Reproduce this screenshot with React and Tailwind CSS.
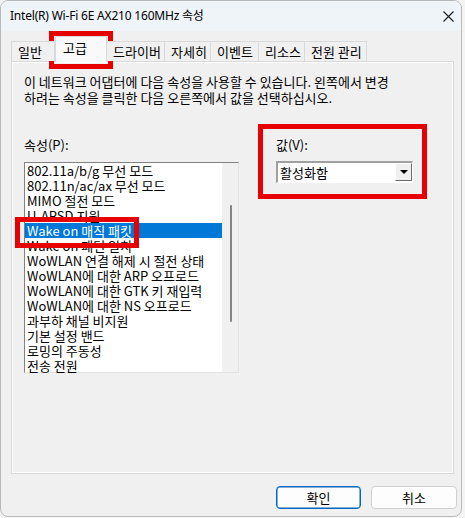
const tabs = [
  { label: "일반", w: "w-[44px]" },
  { label: "고급", w: "w-[52px]", active: true },
  { label: "드라이버", w: "w-[59px]" },
  { label: "자세히", w: "w-[47px]" },
  { label: "이벤트", w: "w-[49px]" },
  { label: "리소스", w: "w-[47px]" },
  { label: "전원 관리", w: "w-[63px]" },
];

const properties = [
  "802.11a/b/g 무선 모드",
  "802.11n/ac/ax 무선 모드",
  "MIMO 절전 모드",
  "U-APSD 지원",
  "Wake on 매직 패킷",
  "Wake on 패턴 일치",
  "WoWLAN 연결 해제 시 절전 상태",
  "WoWLAN에 대한 ARP 오프로드",
  "WoWLAN에 대한 GTK 키 재입력",
  "WoWLAN에 대한 NS 오프로드",
  "과부하 채널 비지원",
  "기본 설정 밴드",
  "로밍의 주동성",
  "전송 전원",
];

const SELECTED = 4;

const App = () => {
  return (
    <div className="relative w-[465px] h-[518px] overflow-hidden bg-[#f4f4f4] font-['Noto_Sans_CJK_KR',sans-serif] text-[13px] text-black">
      {/* Dialog window */}
      <div className="w-[462px] h-[517px] rounded-lg border border-[#b9b9b9] bg-[#f0f0f0] overflow-hidden flex flex-col">
        {/* Title bar */}
        <div className="h-[30px] shrink-0 bg-[#eff4f9] flex items-center justify-between pl-[9px] pr-[7px]">
          <span className="font-['Noto_Sans','Noto_Sans_CJK_KR',sans-serif] text-[12px] leading-none tracking-[-0.2px]">
            Intel(R) Wi-Fi 6E AX210 160MHz 속성
          </span>
          <svg width="11" height="11" viewBox="0 0 11 11">
            <path d="M0.5 0.5 L10.5 10.5 M10.5 0.5 L0.5 10.5" stroke="#1a1a1a" strokeWidth="1.1" />
          </svg>
        </div>

        {/* Body */}
        <div className="flex-1 pl-[10px] pr-[7px] pt-[10px]">
          {/* Tabs */}
          <div className="flex items-end h-[20px] relative z-10">
            {tabs.map((tab) =>
              tab.active ? (
                <div
                  key={tab.label}
                  className={`${tab.w} h-[26px] -mb-[1px] bg-[#f9f9f9] border border-b-0 border-[#d9d9d9] pl-[7px] pt-[3px] leading-[16px]`}
                >
                  {tab.label}
                </div>
              ) : (
                <div
                  key={tab.label}
                  className={`${tab.w} h-[20px] bg-[#f0f0f0] border border-b-0 border-[#d9d9d9] -ml-[1px] first:ml-0 pl-[6px] pt-[2px] leading-[16px] whitespace-nowrap`}
                >
                  {tab.label}
                </div>
              )
            )}
          </div>

          {/* Panel */}
          <div className="h-[413px] border border-[#d9d9d9] bg-[#f9f9f9]">
            <div className="h-full border border-white bg-[#f0f0f0] pl-[11px] pt-[11px] flex flex-col">
              <p className="leading-[16px]">
                이 네트워크 어댑터에 다음 속성을 사용할 수 있습니다. 왼쪽에서 변경
                <br />
                하려는 속성을 클릭한 다음 오른쪽에서 값을 선택하십시오.
              </p>

              <div className="flex mt-[31px]">
                {/* Property list */}
                <div className="w-[215px]">
                  <div className="leading-[16px] h-[16px]">속성(P):</div>
                  <div className="mt-[9px] h-[211px] border-t border-l border-[#828282] border-r border-b border-r-[#e3e3e3] border-b-[#e3e3e3] bg-white flex">
                    <div className="flex-1 min-w-0">
                      {properties.map((p, i) => (
                        <div
                          key={p}
                          className={`h-[15px] leading-[15px] pl-[2px] whitespace-nowrap ${
                            i === SELECTED ? "bg-[#0078d7] text-white" : ""
                          }`}
                        >
                          {p}
                        </div>
                      ))}
                    </div>
                    <div className="w-[16px] bg-[#f0f0f0] flex justify-center pt-[42px] pl-[1px]">
                      <div className="w-[2px] h-[117px] rounded-full bg-[#858585]" />
                    </div>
                  </div>
                </div>

                {/* Value */}
                <div className="ml-[37px]">
                  <div className="leading-[16px] h-[16px]">값(V):</div>
                  <div className="mt-[8px] w-[137px] h-[22px] border-t-2 border-l-2 border-[#a0a0a0] border-r border-b border-r-white border-b-white bg-white flex">
                    <div className="flex-1 pl-[2px] leading-[19px]">활성화함</div>
                    <div className="w-[17px] h-[18px] border border-t-white border-l-white border-r-[#696969] border-b-[#696969] bg-[#f0f0f0] flex items-center justify-center">
                      <svg width="8" height="4" viewBox="0 0 8 4">
                        <path d="M0 0 L8 0 L4 4 Z" fill="#000" />
                      </svg>
                    </div>
                  </div>
                </div>
              </div>
            </div>
          </div>

          {/* Buttons */}
          <div className="flex justify-end gap-[10px] mt-[12px] -mr-[3px]">
            <button className="w-[85px] h-[23px] rounded-[4px] border border-[#0067c0] bg-[#fdfdfd] shadow-[inset_0_0_0_0.5px_#0067c0] leading-[20px]">
              확인
            </button>
            <button className="w-[86px] h-[23px] rounded-[4px] border border-[#d0d0d0] bg-[#fdfdfd] leading-[20px]">
              취소
            </button>
          </div>
        </div>
      </div>

      {/* Red annotation boxes */}
      <div className="absolute left-[49px] top-[31px] w-[64px] h-[38px] border-[5px] border-[#e60000]" />
      <div className="absolute left-[15px] top-[217px] w-[124px] h-[31px] border-[5px] border-[#e60000]" />
      <div className="absolute left-[258px] top-[124px] w-[169px] h-[75px] border-[5px] border-[#e60000]" />
    </div>
  );
};

export default App;
